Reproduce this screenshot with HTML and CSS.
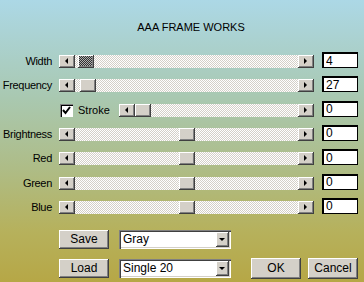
FILE: index.html
```html
<!DOCTYPE html>
<html lang="en">
<head>
    <meta charset="UTF-8">
    <title>AAA Frame Works</title>
    <link rel="stylesheet" href="styles.css">
</head>
<body>

    <h1 class="title">AAA FRAME WORKS</h1>

    <!-- Slider rows -->
    <div class="rows">
        <div class="row">
            <span class="label">Width</span>
            <div class="slider">
                <div class="scroll">
                    <span class="arrow left"></span>
                    <span class="track"><span class="thumb dark" style="margin-left: 3px"></span></span>
                    <span class="arrow right"></span>
                </div>
            </div>
            <input class="value" type="text" value="4">
        </div>

        <div class="row">
            <span class="label">Frequency</span>
            <div class="slider">
                <div class="scroll">
                    <span class="arrow left"></span>
                    <span class="track"><span class="thumb" style="margin-left: 5px"></span></span>
                    <span class="arrow right"></span>
                </div>
            </div>
            <input class="value" type="text" value="27">
        </div>

        <div class="row">
            <span class="label"></span>
            <div class="slider">
                <span class="checkbox">
                    <svg width="9" height="9" viewBox="0 0 9 9"><polyline points="1,4 3.5,7 8,1" fill="none" stroke="#000" stroke-width="2"/></svg>
                </span>
                <span class="check-label">Stroke</span>
                <div class="scroll short">
                    <span class="arrow left"></span>
                    <span class="track"><span class="thumb"></span></span>
                    <span class="arrow right"></span>
                </div>
            </div>
            <input class="value" type="text" value="0">
        </div>

        <div class="row">
            <span class="label">Brightness</span>
            <div class="slider">
                <div class="scroll">
                    <span class="arrow left"></span>
                    <span class="track"><span class="thumb" style="margin-left: 104px"></span></span>
                    <span class="arrow right"></span>
                </div>
            </div>
            <input class="value" type="text" value="0">
        </div>

        <div class="row">
            <span class="label">Red</span>
            <div class="slider">
                <div class="scroll">
                    <span class="arrow left"></span>
                    <span class="track"><span class="thumb" style="margin-left: 104px"></span></span>
                    <span class="arrow right"></span>
                </div>
            </div>
            <input class="value" type="text" value="0">
        </div>

        <div class="row">
            <span class="label">Green</span>
            <div class="slider">
                <div class="scroll">
                    <span class="arrow left"></span>
                    <span class="track"><span class="thumb" style="margin-left: 104px"></span></span>
                    <span class="arrow right"></span>
                </div>
            </div>
            <input class="value" type="text" value="0">
        </div>

        <div class="row">
            <span class="label">Blue</span>
            <div class="slider">
                <div class="scroll">
                    <span class="arrow left"></span>
                    <span class="track"><span class="thumb" style="margin-left: 104px"></span></span>
                    <span class="arrow right"></span>
                </div>
            </div>
            <input class="value" type="text" value="0">
        </div>
    </div>

    <!-- Presets and dialog buttons -->
    <div class="footer">
        <div class="presets">
            <div class="preset-row">
                <button class="btn">Save</button>
                <div class="select"><span class="select-text">Gray</span><span class="drop"></span></div>
            </div>
            <div class="preset-row">
                <button class="btn">Load</button>
                <div class="select"><span class="select-text">Single 20</span><span class="drop"></span></div>
            </div>
        </div>
        <div class="actions">
            <button class="btn big">OK</button>
            <button class="btn big">Cancel</button>
        </div>
    </div>

</body>
</html>
```

FILE: styles.css
```css
body {
    margin: 0;
    width: 364px;
    height: 282px;
    overflow: hidden;
    font-family: 'Liberation Sans', Arial, sans-serif;
    font-size: 11px;
    color: #000;
    background: linear-gradient(#acd8e6 0%, #a9c8b0 35%, #aebc86 60%, #b6b15c 82%, #b6a746 100%);
}

.title {
    margin: 0;
    padding: 21px 0 0 18px;
    text-align: center;
    font-size: 11px;
    font-weight: normal;
    line-height: 13px;
}

.rows {
    display: flex;
    flex-direction: column;
    gap: 8.33px;
    margin-top: 18px;
}

.row {
    display: flex;
    align-items: flex-end;
    height: 16px;
}

.label {
    width: 52px;
    margin-right: 7px;
    text-align: right;
    line-height: 13px;
    letter-spacing: -0.3px;
}

.slider {
    width: 255px;
    display: flex;
    align-items: center;
    height: 13px;
}

.scroll {
    flex: 1;
    display: flex;
    height: 13px;
}

.scroll.short {
    flex: 0 0 195px;
    margin-left: auto;
}

.arrow,
.thumb,
.btn,
.drop {
    background-color: #d4d0c8;
    box-shadow: inset -1px -1px #404040, inset 1px 1px #fff, inset -2px -2px #808080;
}

.arrow {
    position: relative;
    width: 16px;
    height: 13px;
}

.arrow::before {
    content: "";
    position: absolute;
    top: 3px;
    left: 6px;
    border-top: 3px solid transparent;
    border-bottom: 3px solid transparent;
}

.arrow.left::before {
    border-right: 3px solid #000;
}

.arrow.right::before {
    border-left: 3px solid #000;
}

.track {
    flex: 1;
    display: flex;
    background-image: conic-gradient(#fff 25%, #d4d0c8 0 50%, #fff 0 75%, #d4d0c8 0);
    background-size: 2px 2px;
}

.thumb {
    width: 16px;
    height: 13px;
}

.thumb.dark {
    background-image: conic-gradient(#b0b0b0 25%, #303030 0 50%, #b0b0b0 0 75%, #303030 0);
    background-size: 2px 2px;
    background-position: 1px 1px;
}

.checkbox {
    width: 13px;
    height: 13px;
    box-sizing: border-box;
    margin-left: 1px;
    background: #fff;
    box-shadow: inset 1px 1px #808080, inset 2px 2px #000, inset -1px -1px #fff;
    display: flex;
    align-items: center;
    justify-content: center;
}

.check-label {
    margin-left: 5px;
    line-height: 13px;
}

.value {
    margin: 0 0 0 8px;
    width: 36px;
    height: 16px;
    box-sizing: border-box;
    padding: 0 2px;
    border: 1px solid #000;
    border-top-width: 2px;
    border-left-width: 2px;
    background: #fff;
    font-family: 'Liberation Sans', Arial, sans-serif;
    font-size: 12px;
    line-height: 12px;
    color: #000;
    outline: none;
}

.footer {
    display: flex;
    align-items: flex-end;
    padding-left: 59px;
    margin-top: 16px;
}

.presets {
    display: flex;
    flex-direction: column;
    gap: 10px;
}

.preset-row {
    display: flex;
    gap: 10px;
    height: 19px;
}

.btn {
    width: 50px;
    height: 19px;
    border: none;
    padding: 0;
    font-family: 'Liberation Sans', Arial, sans-serif;
    font-size: 12px;
    color: #000;
}

.btn.big {
    height: 21px;
}

.select {
    width: 112px;
    height: 19px;
    box-sizing: border-box;
    padding: 2px;
    display: flex;
    align-items: stretch;
    background: #fff;
    box-shadow: inset 1px 1px #808080, inset 2px 2px #404040, inset -1px -1px #fff, inset -2px -2px #d4d0c8;
}

.select-text {
    flex: 1;
    padding-left: 2px;
    font-size: 12px;
    line-height: 15px;
}

.drop {
    position: relative;
    width: 13px;
}

.drop::before {
    content: "";
    position: absolute;
    top: 6px;
    left: 3px;
    border-left: 3px solid transparent;
    border-right: 3px solid transparent;
    border-top: 3px solid #000;
}

.actions {
    display: flex;
    gap: 7px;
    margin-left: 20px;
    margin-bottom: -1px;
}
```
